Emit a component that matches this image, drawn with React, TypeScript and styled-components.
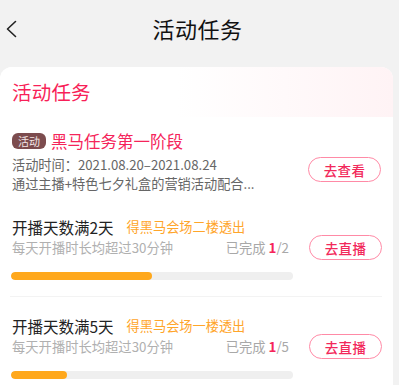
import React from "react";
import styled, { createGlobalStyle } from "styled-components";

const GlobalStyle = createGlobalStyle`
  html, body {
    margin: 0;
    padding: 0;
    background: #f2f2f2;
    font-family: "Noto Sans CJK SC", "Noto Sans", sans-serif;
    -webkit-font-smoothing: antialiased;
  }
  * { box-sizing: border-box; }
`;

const Page = styled.div`
  width: 399px;
  height: 385px;
  overflow: hidden;
  background: #f2f2f2;
`;

const NavBar = styled.div`
  height: 55px;
  display: grid;
  grid-template-columns: 1fr auto 1fr;
  align-items: center;
  padding: 0 9px 0 5px;
`;

const BackButton = styled.div`
  display: flex;
  align-items: center;
  justify-self: start;
  padding-top: 2px;
`;

const NavTitle = styled.div`
  font-size: 22px;
  line-height: 22px;
  font-weight: 400;
  color: #111;
  letter-spacing: 0.5px;
`;

const Card = styled.div`
  margin-top: 12px;
  width: 393px;
  background: #fff;
  border-radius: 12px 12px 0 0;
  overflow: hidden;
`;

const CardHead = styled.div`
  height: 50px;
  display: flex;
  align-items: center;
  padding-left: 12px;
  background: linear-gradient(90deg, #ffffff 45%, #fff3f5 100%);
`;

const CardTitle = styled.div`
  font-size: 19.5px;
  line-height: 20px;
  color: #f81f58;
  letter-spacing: 0.2px;
`;

const Activity = styled.div`
  display: flex;
  align-items: flex-start;
  padding: 14px 12px 5px 12px;
`;

const ActivityBody = styled.div`
  flex: 1;
  min-width: 0;
`;

const ActivityTitleRow = styled.div`
  display: flex;
  align-items: center;
  gap: 5px;
  height: 20px;
`;

const Tag = styled.span`
  display: inline-flex;
  align-items: center;
  justify-content: center;
  width: 34px;
  height: 16px;
  border-radius: 6px;
  background: #7c4c4e;
  color: #f3e6e6;
  font-size: 11px;
  line-height: 16px;
`;

const ActivityName = styled.span`
  font-size: 16.5px;
  line-height: 20px;
  color: #f5245a;
`;

const InfoBlock = styled.div`
  margin-top: 4px;
`;

const InfoLine = styled.div`
  font-size: 13.2px;
  line-height: 19px;
  color: #666;
  white-space: nowrap;
`;

const PillButton = styled.div<{ $top?: number }>`
  flex: none;
  width: 73px;
  height: 25px;
  margin-top: ${(p) => p.$top ?? 0}px;
  border: 1px solid #ff8aa6;
  border-radius: 13px;
  display: flex;
  align-items: center;
  justify-content: center;
  font-size: 13.5px;
  font-weight: 500;
  color: #f2295b;
  letter-spacing: 0.3px;
`;

const TaskList = styled.div`
  padding: 0 11px 0 10px;
`;

const Task = styled.div`
  padding: 21px 0 16px 2px;
  & + & {
    border-top: 1px solid #f3f3f3;
  }
`;

const TaskHead = styled.div`
  display: flex;
  align-items: center;
  height: 16px;
`;

const TaskName = styled.span`
  font-size: 15.5px;
  line-height: 16px;
  color: #222;
`;

const Reward = styled.span`
  margin-left: 13px;
  font-size: 13.2px;
  line-height: 16px;
  color: #ffa52a;
`;

const TaskMid = styled.div`
  display: flex;
  align-items: center;
  height: 25px;
`;

const TaskDesc = styled.span`
  flex: 1;
  font-size: 13.3px;
  color: #b0b0b0;
  white-space: nowrap;
`;

const Done = styled.span`
  font-size: 13.3px;
  color: #a8a8a8;
  margin-right: 20px;
  white-space: nowrap;
`;

const DoneCount = styled.b`
  color: #f5245a;
  font-weight: 700;
`;

const Track = styled.div`
  margin-top: 12px;
  margin-left: -1px;
  width: 282px;
  height: 8px;
  border-radius: 4px;
  background: #efefef;
  overflow: hidden;
`;

const Fill = styled.div`
  height: 100%;
  border-radius: 4px;
  background: #ffa81c;
`;

const tasks = [
  { name: "开播天数满2天", reward: "得黑马会场二楼透出", done: 1, total: 2 },
  { name: "开播天数满5天", reward: "得黑马会场一楼透出", done: 1, total: 5 },
];

export default function App() {
  return (
    <Page>
      <GlobalStyle />
      <NavBar>
        <BackButton>
          <svg width="12" height="18" viewBox="0 0 12 18" fill="none">
            <path d="M10.5 1.5L2.5 9l8 7.5" stroke="#222" strokeWidth="1.6" strokeLinecap="round" strokeLinejoin="round" />
          </svg>
        </BackButton>
        <NavTitle>活动任务</NavTitle>
        <div />
      </NavBar>
      <Card>
        <CardHead>
          <CardTitle>活动任务</CardTitle>
        </CardHead>
        <Activity>
          <ActivityBody>
            <ActivityTitleRow>
              <Tag>活动</Tag>
              <ActivityName>黑马任务第一阶段</ActivityName>
            </ActivityTitleRow>
            <InfoBlock>
              <InfoLine>活动时间：2021.08.20–2021.08.24</InfoLine>
              <InfoLine>通过主播+特色七夕礼盒的营销活动配合...</InfoLine>
            </InfoBlock>
          </ActivityBody>
          <PillButton $top={26}>去查看</PillButton>
        </Activity>
        <TaskList>
          {tasks.map((t) => (
            <Task key={t.name}>
              <TaskHead>
                <TaskName>{t.name}</TaskName>
                <Reward>{t.reward}</Reward>
              </TaskHead>
              <TaskMid>
                <TaskDesc>每天开播时长均超过30分钟</TaskDesc>
                <Done>
                  已完成 <DoneCount>{t.done}</DoneCount>/{t.total}
                </Done>
                <PillButton>去直播</PillButton>
              </TaskMid>
              <Track>
                <Fill style={{ width: `${(t.done / t.total) * 100}%` }} />
              </Track>
            </Task>
          ))}
        </TaskList>
      </Card>
    </Page>
  );
}
